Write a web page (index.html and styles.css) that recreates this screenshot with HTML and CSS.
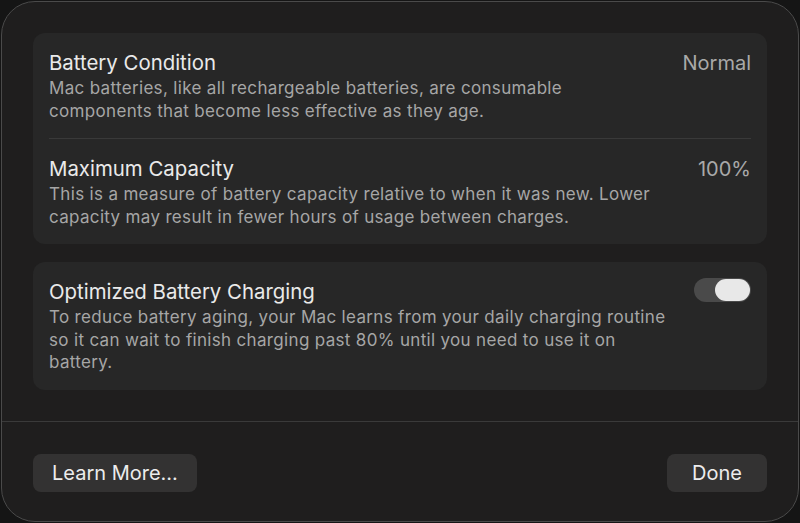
FILE: index.html
```html
<!DOCTYPE html>
<html lang="en">
<head>
  <meta charset="UTF-8">
  <title>Battery Health</title>
  <link rel="stylesheet" href="styles.css">
</head>
<body>
  <div class="window">
    <div class="content">
      <div class="card">
        <div class="row">
          <div class="text">
            <div class="title">Battery Condition</div>
            <p class="desc">Mac batteries, like all rechargeable batteries, are consumable<br>components that become less effective as they age.</p>
          </div>
          <div class="value">Normal</div>
        </div>
        <div class="divider"></div>
        <div class="row">
          <div class="text">
            <div class="title">Maximum Capacity</div>
            <p class="desc">This is a measure of battery capacity relative to when it was new. Lower<br>capacity may result in fewer hours of usage between charges.</p>
          </div>
          <div class="value">100%</div>
        </div>
      </div>

      <div class="card">
        <div class="row">
          <div class="text">
            <div class="title">Optimized Battery Charging</div>
            <p class="desc">To reduce battery aging, your Mac learns from your daily charging routine<br>so it can wait to finish charging past 80% until you need to use it on<br>battery.</p>
          </div>
          <div class="toggle"><span class="knob"></span></div>
        </div>
      </div>
    </div>

    <div class="footer">
      <button class="btn">Learn More...</button>
      <button class="btn">Done</button>
    </div>
  </div>
</body>
</html>
```

FILE: styles.css
```css
html, body { margin: 0; padding: 0; }
body {
  background: #151515;
  width: 800px;
  height: 523px;
  overflow: hidden;
  font-family: Inter, "Noto Sans", sans-serif;
  -webkit-font-smoothing: antialiased;
}
p { margin: 0; }

.window {
  box-sizing: border-box;
  margin: 1px;
  height: 521px;
  background: #1f1e1e;
  border: 1px solid #4a4a4a;
  border-radius: 34px;
  display: flex;
  flex-direction: column;
}

.content {
  padding: 31px 31px 0 31px;
  display: flex;
  flex-direction: column;
  gap: 18px;
  flex: 1;
}

.card {
  background: #272727;
  border-radius: 12px;
  padding: 0 16px;
}

.row {
  display: flex;
  justify-content: space-between;
  align-items: flex-start;
  padding: 16px 0 16px;
}

.title {
  color: #eaeaea;
  font-size: 20.4px;
  line-height: 28px;
}

.desc {
  color: #a6a6a6;
  font-size: 17px;
  line-height: 22.5px;
  letter-spacing: 0.33px;
}

.value {
  color: #a9a9a9;
  font-size: 20px;
  line-height: 28px;
}

.divider {
  height: 1px;
  background: #393939;
}

.toggle {
  width: 57px;
  height: 24px;
  border-radius: 12px;
  background: #4a4a4a;
  display: flex;
  justify-content: flex-end;
  align-items: center;
  padding: 0 1px;
  box-sizing: border-box;
}
.knob {
  width: 35px;
  height: 22px;
  border-radius: 11px;
  background: #e8e8e8;
}

.footer {
  border-top: 1px solid #3a3a3a;
  height: 100px;
  box-sizing: border-box;
  display: flex;
  justify-content: space-between;
  align-items: flex-start;
  padding: 32px 31px 0 31px;
}

.btn {
  font-family: inherit;
  font-size: 20px;
  color: #ececec;
  background: #333232;
  border: none;
  border-radius: 8px;
  height: 38px;
  padding: 0 19px;
}
.btn:last-child { padding: 0 25px; }
```
